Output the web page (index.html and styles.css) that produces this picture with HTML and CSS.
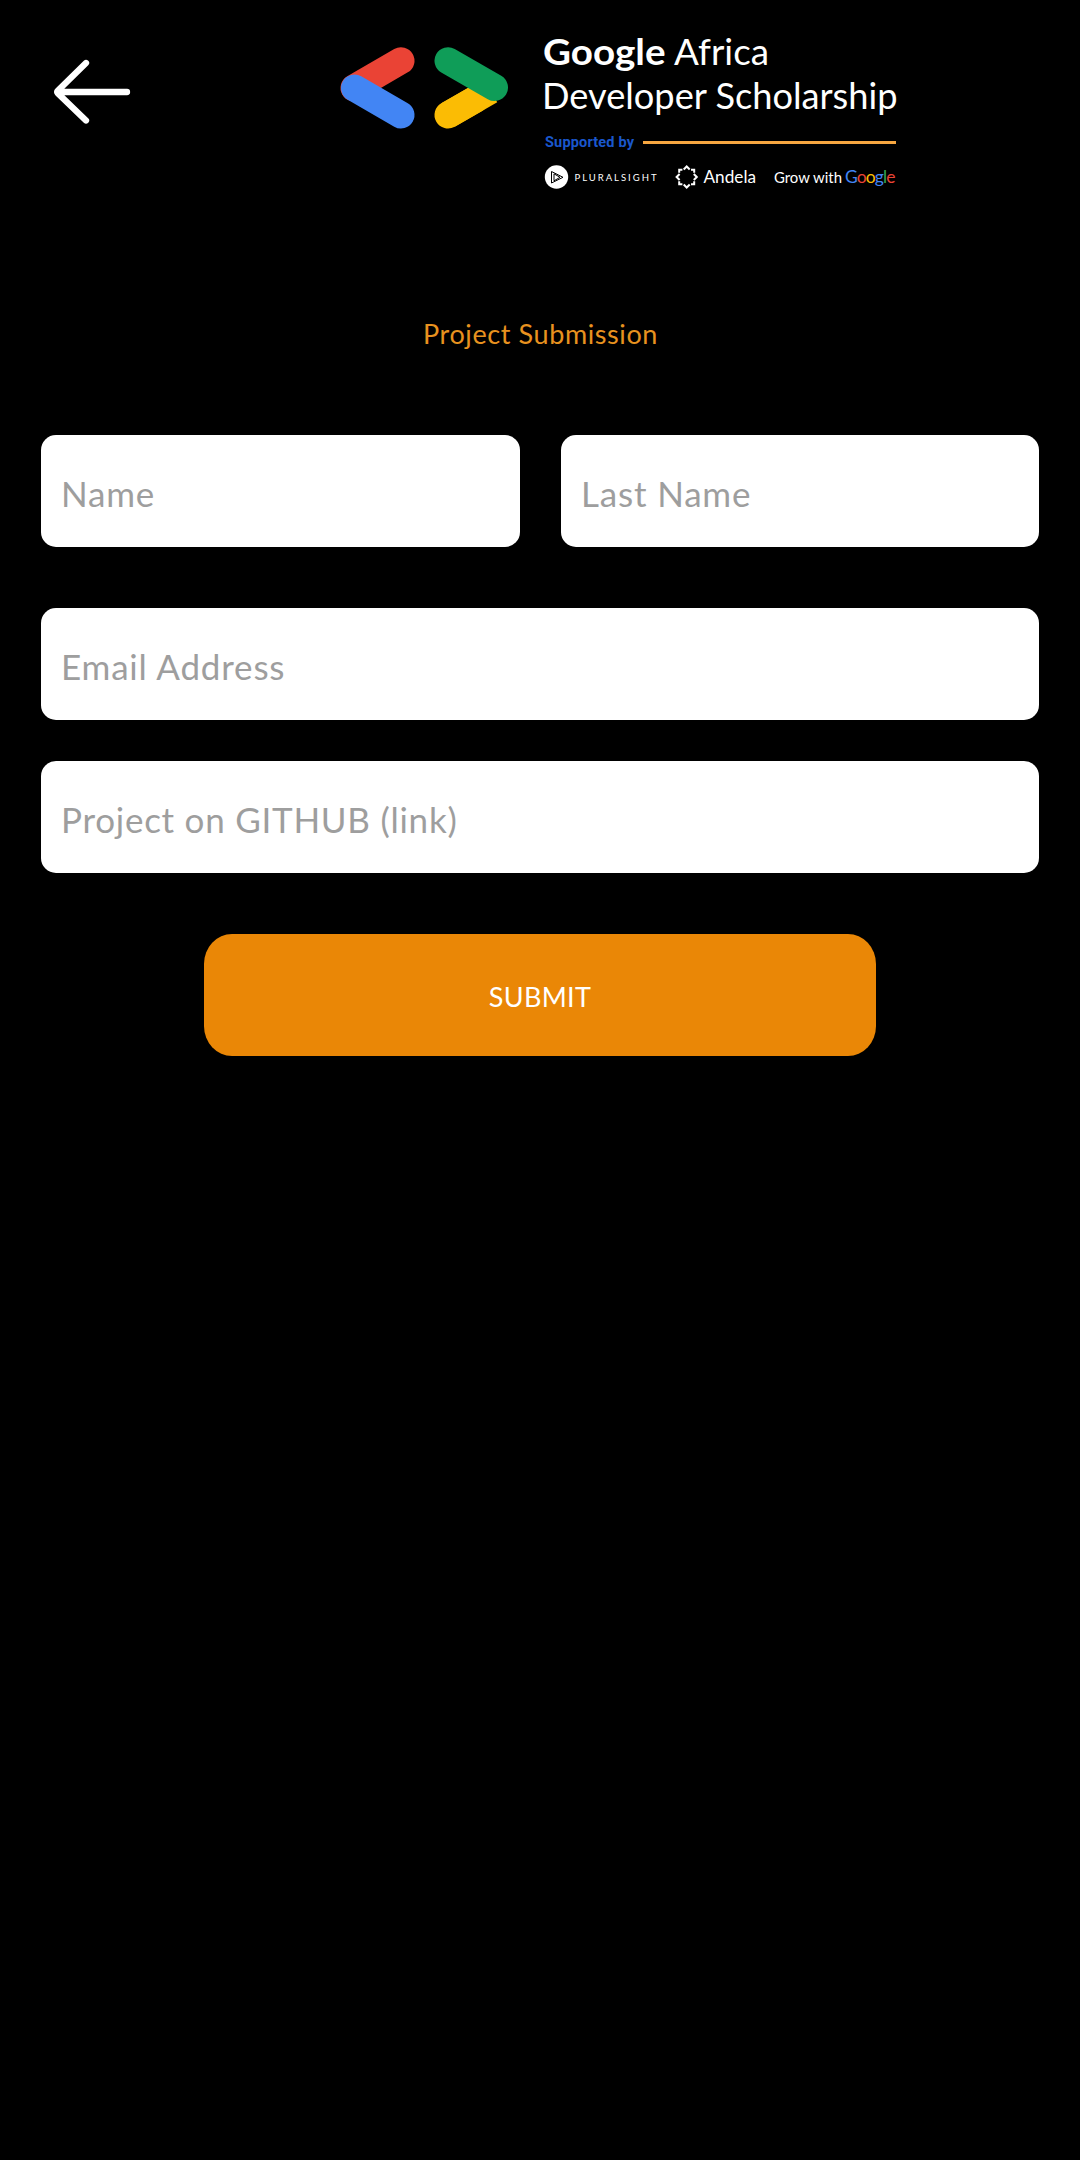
FILE: index.html
```html
<!DOCTYPE html>
<html lang="en">
<head>
<meta charset="utf-8">
<title>Project Submission</title>
<link rel="stylesheet" href="styles.css">
</head>
<body>
<header class="topbar">
  <button class="back" type="button" aria-label="Back">
    <svg width="80" height="68" viewBox="52 58 80 68"><path d="M127 92H57.500M86 63L58 90.500Q56.500 92 58 93.500L86 120.500" class="back-arrow"/></svg>
  </button>
  <svg class="logo" width="570" height="180" viewBox="335 20 570 180">
    <g class="bars">
      <path d="M401 60.700L354 88" stroke="#ea4335"/>
      <path d="M354.500 88L401 115" stroke="#4285f4"/>
      <path d="M448 115L475 99.500" stroke="#fbbc04"/>
      <path d="M448 115L490.500 90.600" stroke="#fbbc04" class="butt"/>
      <path d="M448 60.700L494.500 87.500" stroke="#0f9d58"/>
    </g>
    <g class="title">
      <text x="543" y="65" class="strong" textLength="122.500" lengthAdjust="spacingAndGlyphs">Google</text>
      <text x="674" y="65" textLength="95" lengthAdjust="spacingAndGlyphs">Africa</text>
      <text x="542" y="109" textLength="355.500" lengthAdjust="spacingAndGlyphs">Developer Scholarship</text>
    </g>
    <text x="545" y="147.300" class="supported" textLength="89">Supported by</text>
    <path d="M643 142.500H896" class="rule"/>
    <circle cx="556.500" cy="177" r="11.700" fill="#fff"/>
    <path d="M551.500 171.500L563 177.300L551.500 183ZM554 173.800L560 177.300L554 180.800Z" class="play"/>
    <text x="574.500" y="180.600" class="pluralsight" textLength="82">PLURALSIGHT</text>
    <path d="M683.700 169.500L686.700 166.500L689.700 169.500M691 169.700H694.200V172.800M693.800 174L696.800 177L693.800 180M694.200 181.200V184.300H691M689.700 184.500L686.700 187.500L683.700 184.500M682.400 184.300H679.200V181.200M679.600 180L676.600 177L679.600 174M679.200 172.800V169.700H682.400" class="star"/>
    <text x="703.500" y="183.300" class="andela" textLength="52.500" lengthAdjust="spacingAndGlyphs">Andela</text>
    <text x="774" y="183.300" class="grow" textLength="68" lengthAdjust="spacingAndGlyphs">Grow with</text>
    <text x="845" y="183.300" class="google" textLength="50.500"><tspan fill="#4285f4">G</tspan><tspan fill="#ea4335">o</tspan><tspan fill="#fbbc04">o</tspan><tspan fill="#4285f4">g</tspan><tspan fill="#34a853">l</tspan><tspan fill="#ea4335">e</tspan></text>
  </svg>
</header>
<main>
  <h1 class="heading">Project Submission</h1>
  <form class="form">
    <div class="names">
      <input class="field" type="text" placeholder="Name">
      <input class="field" type="text" placeholder="Last Name">
    </div>
    <input class="field email" type="text" placeholder="Email Address">
    <input class="field link" type="text" placeholder="Project on GITHUB (link)">
    <button class="submit" type="button">SUBMIT</button>
  </form>
</main>
</body>
</html>
```
FILE: styles.css
```css
* { box-sizing: border-box; }
body {
  margin: 0;
  min-height: 2160px;
  background: #000;
  font-family: Lato, "Liberation Sans", sans-serif;
}
.topbar {
  display: flex;
  align-items: flex-start;
  height: 200px;
  padding: 20px 0 0 52px;
}
.back {
  width: 80px;
  height: 68px;
  margin: 38px 203px 0 0;
  padding: 0;
  border: 0;
  background: none;
}
.back svg, .logo { display: block; }
.back-arrow {
  fill: none;
  stroke: #fff;
  stroke-width: 6.3;
  stroke-linecap: round;
  stroke-linejoin: round;
}
.bars path { stroke-width: 27; stroke-linecap: round; }
.bars .butt { stroke-linecap: butt; }
.title { font-size: 36.5px; fill: #fff; }
.strong { font-weight: 700; }
.supported { font: 700 14.5px Roboto, sans-serif; fill: #1a57cc; }
.rule { stroke: #f6a640; stroke-width: 3; }
.play { fill: none; stroke: #000; stroke-width: 1; }
.pluralsight { font-size: 9.5px; fill: #fff; }
.star { fill: none; stroke: #fff; stroke-width: 2; }
.andela { font-size: 17px; fill: #fff; }
.grow { font-size: 16px; fill: #fff; }
.google { font-size: 17.5px; }
.heading {
  margin: 114px 0 0 1px;
  height: 40px;
  color: #e8921f;
  font-size: 27px;
  font-weight: 400;
  line-height: 40px;
  letter-spacing: .6px;
  text-align: center;
}
.form {
  display: flex;
  flex-direction: column;
  padding: 81px 41px 0;
}
.names {
  display: grid;
  grid-template-columns: 479px 478px;
  gap: 41px;
}
.field {
  width: 100%;
  height: 112px;
  padding: 3px 20px 0;
  border: 0;
  border-radius: 15px;
  background: #fff;
  color: #333;
  font: 35px Lato, "Liberation Sans", sans-serif;
  letter-spacing: .82px;
}
.field::placeholder { color: #9e9e9e; opacity: 1; }
.email { margin-top: 61px; }
.link { margin-top: 41px; letter-spacing: .74px; }
.submit {
  align-self: center;
  width: 672px;
  height: 122px;
  margin-top: 61px;
  padding: 2px 0 0;
  border: 0;
  border-radius: 28px / 30px;
  background: #ea8706;
  color: #fff;
  font: 27px Lato, "Liberation Sans", sans-serif;
  letter-spacing: .35px;
}
```
